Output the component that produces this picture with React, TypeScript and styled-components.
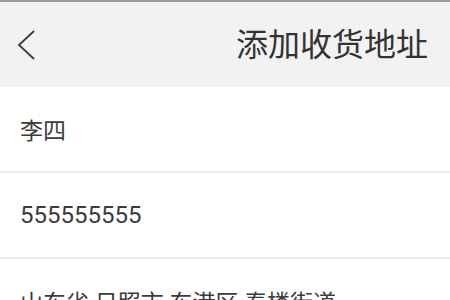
import React from "react";
import styled, { createGlobalStyle } from "styled-components";

const GlobalStyle = createGlobalStyle`
  html, body {
    margin: 0;
    padding: 0;
    background: #ffffff;
  }
  body {
    font-family: Roboto, "Noto Sans CJK SC", sans-serif;
    color: #333333;
  }
`;

const Page = styled.div`
  display: flex;
  flex-direction: column;
  border-top: 2px solid #9b9b9b;
`;

const Header = styled.header`
  display: flex;
  align-items: center;
  justify-content: space-between;
  height: 85px;
  padding: 0 22px 0 17px;
  background: #f2f2f2;
`;

const BackButton = styled.button`
  display: flex;
  align-items: center;
  justify-content: center;
  padding: 0;
  border: 0;
  background: none;
  color: #3a3a3a;
  cursor: pointer;
`;

const Title = styled.h1`
  margin: 0;
  font-size: 32px;
  font-weight: 400;
  line-height: 1;
  color: #333333;
`;

const Field = styled.div`
  display: flex;
  align-items: center;
  height: 86px;
  padding: 0 20px;
  border-bottom: 2px solid #ececec;
  box-sizing: border-box;
  font-size: ${(p: { $size?: number }) => p.$size ?? 24}px;
  color: #3c3c3c;
`;

const fields = [
  { value: "李四", size: 23 },
  { value: "555555555", size: 24 },
  { value: "山东省 日照市 东港区 秦楼街道", size: 23 },
];

export default function App() {
  return (
    <>
      <GlobalStyle />
      <Page>
        <Header>
          <BackButton aria-label="返回">
            <svg width="20" height="32" viewBox="0 0 20 32" fill="none">
              <path d="M17 2 L2 16 L17 30" stroke="currentColor" strokeWidth="1.8" strokeLinejoin="miter" />
            </svg>
          </BackButton>
          <Title>添加收货地址</Title>
        </Header>
        {fields.map((f) => (
          <Field key={f.value} $size={f.size}>
            {f.value}
          </Field>
        ))}
      </Page>
    </>
  );
}
